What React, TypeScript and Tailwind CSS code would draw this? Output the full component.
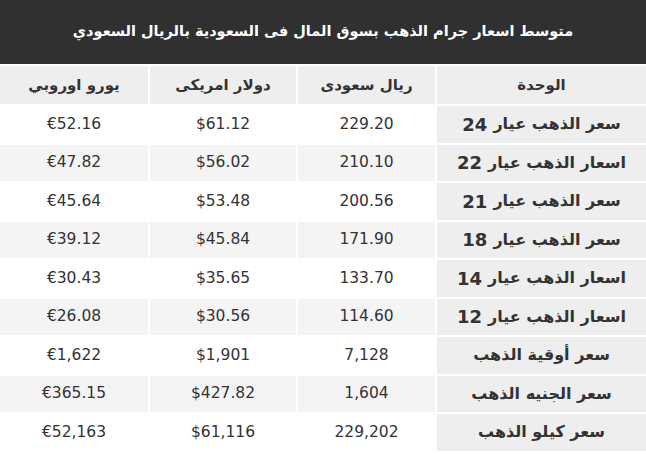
const rows = [
  { label: "سعر الذهب عيار", karat: "24", sar: "229.20", usd: "$61.12", eur: "€52.16" },
  { label: "اسعار الذهب عيار", karat: "22", sar: "210.10", usd: "$56.02", eur: "€47.82" },
  { label: "سعر الذهب عيار", karat: "21", sar: "200.56", usd: "$53.48", eur: "€45.64" },
  { label: "سعر الذهب عيار", karat: "18", sar: "171.90", usd: "$45.84", eur: "€39.12" },
  { label: "اسعار الذهب عيار", karat: "14", sar: "133.70", usd: "$35.65", eur: "€30.43" },
  { label: "اسعار الذهب عيار", karat: "12", sar: "114.60", usd: "$30.56", eur: "€26.08" },
  { label: "سعر أوقية الذهب", sar: "7,128", usd: "$1,901", eur: "€1,622" },
  { label: "سعر الجنيه الذهب", sar: "1,604", usd: "$427.82", eur: "€365.15" },
  { label: "سعر كيلو الذهب", sar: "229,202", usd: "$61,116", eur: "€52,163" },
];

const headers = ["الوحدة", "ريال سعودى", "دولار امريكى", "يورو اوروبي"];

export default function App() {
  return (
    <div
      dir="rtl"
      className="w-[646px] h-[454px] overflow-hidden bg-white text-[#333]"
      style={{ fontFamily: '"DejaVu Sans", "Noto Sans", sans-serif' }}
    >
      <div className="flex h-[64px] items-center justify-center bg-[#303030] text-[14.5px] font-bold text-white">
        متوسط اسعار جرام الذهب بسوق المال فى السعودية بالريال السعودي
      </div>
      <div className="mt-[2px] grid grid-cols-[209px_137px_146px_148px] gap-[2px]">
        {headers.map((h) => (
          <div
            key={h}
            className="flex h-[38px] items-center justify-center bg-[#eeeeee] text-[15px] font-bold"
          >
            {h}
          </div>
        ))}
        {rows.map((r, i) => {
          const stripe = i % 2 === 1 ? "bg-[#f4f4f4]" : "bg-white";
          return [
            <div
              key={`l${i}`}
              className="flex h-[36.5px] items-center justify-center gap-[6px] bg-[#eeeeee] text-[16px] font-bold"
            >
              <span>{r.label}</span>
              {r.karat && <span className="text-[18px]">{r.karat}</span>}
            </div>,
            <div key={`s${i}`} dir="ltr" className={`flex h-[36.5px] items-center justify-center text-[15.5px] ${stripe}`}>
              {r.sar}
            </div>,
            <div key={`u${i}`} dir="ltr" className={`flex h-[36.5px] items-center justify-center text-[15.5px] ${stripe}`}>
              {r.usd}
            </div>,
            <div key={`e${i}`} dir="ltr" className={`flex h-[36.5px] items-center justify-center text-[15.5px] ${stripe}`}>
              {r.eur}
            </div>,
          ];
        })}
      </div>
    </div>
  );
}
